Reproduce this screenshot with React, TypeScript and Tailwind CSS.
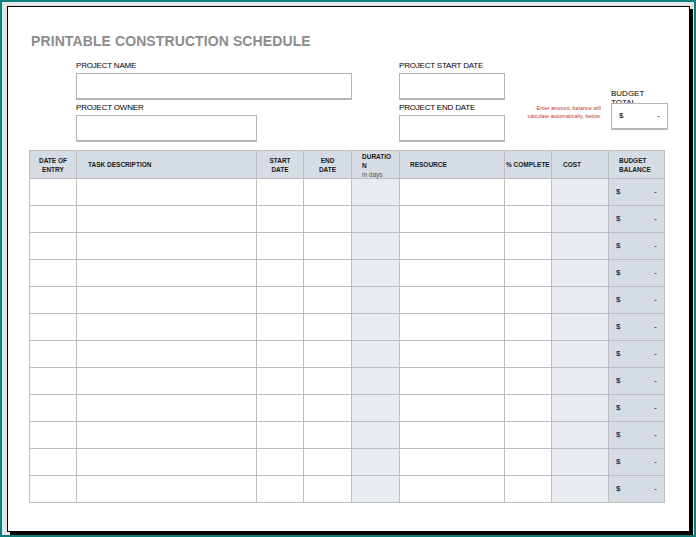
import React from "react";

const cols = [47, 180, 47, 48, 48, 105, 47, 57, 56];
const shade = ["", "", "", "", "bg-[#e8ebef]", "", "", "bg-[#e8ebef]", "bg-[#d6dce4]"];

function Box({ w, children }: { w: number; children?: React.ReactNode }) {
  return (
    <div className="h-[27px] border border-[#b5b5b5] border-b-2 bg-white flex items-center" style={{ width: w }}>
      {children}
    </div>
  );
}

function Label({ children }: { children: React.ReactNode }) {
  return <div className="text-[8px] leading-[10px] h-[12px] text-black tracking-tight">{children}</div>;
}

export default function App() {
  const headers: React.ReactNode[] = [
    <div className="text-center">DATE OF<br />ENTRY</div>,
    <div className="pl-[11px]">TASK DESCRIPTION</div>,
    <div className="text-center">START<br />DATE</div>,
    <div className="text-center">END<br />DATE</div>,
    <div className="pl-[10px] self-start pt-[1px]">DURATIO<br />N<br /><span className="font-normal text-[#555]">in days</span></div>,
    <div className="pl-[10px]">RESOURCE</div>,
    <div className="pl-[1px]">% COMPLETE</div>,
    <div className="pl-[11px]">COST</div>,
    <div className="pl-[10px]">BUDGET<br />BALANCE</div>,
  ];
  return (
    <div className="w-[696px] h-[537px] bg-[#0f7f7a] p-[2px]" style={{ fontFamily: '"Liberation Sans", Arial, sans-serif' }}>
      <div className="w-full h-full bg-[#e6e6e6] pt-[4px] pl-[5px] pr-[4px] pb-[3px]">
        <div className="w-[683px] h-[526px] bg-white border border-black shadow-[3px_3px_0_0_#000]">
          <div className="pl-[23px] pt-[26px] text-[14px] font-bold text-[#8c8c8c] tracking-[0.1px] leading-[16px]">
            PRINTABLE CONSTRUCTION SCHEDULE
          </div>
          <div className="flex pl-[68px] pt-[12px]">
            <div className="flex flex-col">
              <Label>PROJECT NAME</Label>
              <Box w={276} />
              <div className="h-[3px]" />
              <Label>PROJECT OWNER</Label>
              <Box w={181} />
            </div>
            <div className="flex flex-col ml-[47px]">
              <Label>PROJECT START DATE</Label>
              <Box w={106} />
              <div className="h-[3px]" />
              <Label>PROJECT END DATE</Label>
              <Box w={106} />
            </div>
            <div className="flex flex-col ml-[3px] w-[93px] pt-[43px] items-end text-right">
              <div className="text-[5.5px] leading-[8px] text-[#c0392b] w-[84px]">
                Enter amount, balance will calculate automatically, below.
              </div>
            </div>
            <div className="flex flex-col ml-[10px] pt-[27px]">
              <div className="text-[8px] leading-[9px] h-[15px] overflow-hidden w-[40px] pt-[1px]">BUDGET TOTAL</div>
              <Box w={57}>
                <div className="flex justify-between w-full px-[7px] text-[8px]"><span>$</span><span>-</span></div>
              </Box>
            </div>
          </div>
          <div className="ml-[21px] mt-[8px] border-l border-t border-[#bdbdbd] w-fit">
            <div className="flex h-[28px] bg-[#d6dce4]">
              {headers.map((h, i) => (
                <div key={i} className="border-r border-b border-[#bdbdbd] flex items-center text-[6.5px] leading-[9px] font-bold text-[#1a1a1a]" style={{ width: cols[i], justifyContent: i === 0 || i === 2 || i === 3 ? "center" : "flex-start" }}>
                  {h}
                </div>
              ))}
            </div>
            {Array.from({ length: 12 }).map((_, r) => (
              <div key={r} className="flex h-[27px]">
                {cols.map((w, i) => (
                  <div key={i} className={`border-r border-b border-[#bdbdbd] ${shade[i]} flex items-center`} style={{ width: w }}>
                    {i === 8 && (
                      <div className="flex justify-between w-full px-[7px] text-[8px] text-black"><span>$</span><span>-</span></div>
                    )}
                  </div>
                ))}
              </div>
            ))}
          </div>
        </div>
      </div>
    </div>
  );
}
